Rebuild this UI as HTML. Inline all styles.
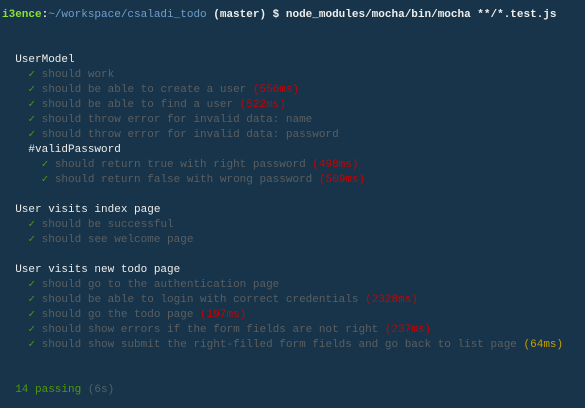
<!DOCTYPE html>
<html><head><meta charset="utf-8"><style>
html,body{margin:0;padding:0;background:#17344a;width:585px;height:408px;overflow:hidden}
pre{margin:0;position:absolute;left:2px;top:8px;font-family:"Liberation Mono",monospace;font-size:11px;line-height:15px;color:#5c5f60}
.g{color:#8ae234;font-weight:bold}
.w{color:#eeeeec;font-weight:bold}
.b{color:#6f9fcf}
.t{color:#eeeeec}
.c{color:#4e9a06}
.r{color:#c00}
.y{color:#c4a000}
</style></head><body><pre><span class="g">i3ence</span><span class="w">:</span><span class="b">~/workspace/csaladi_todo</span><span class="w"> (master) $ node_modules/mocha/bin/mocha **/*.test.js</span>


  <span class="t">UserModel</span>
    <span class="c">✓</span> should work
    <span class="c">✓</span> should be able to create a user <span class="r">(556ms)</span>
    <span class="c">✓</span> should be able to find a user <span class="r">(522ms)</span>
    <span class="c">✓</span> should throw error for invalid data: name
    <span class="c">✓</span> should throw error for invalid data: password
    <span class="t">#validPassword</span>
      <span class="c">✓</span> should return true with right password <span class="r">(498ms)</span>
      <span class="c">✓</span> should return false with wrong password <span class="r">(509ms)</span>

  <span class="t">User visits index page</span>
    <span class="c">✓</span> should be successful
    <span class="c">✓</span> should see welcome page

  <span class="t">User visits new todo page</span>
    <span class="c">✓</span> should go to the authentication page
    <span class="c">✓</span> should be able to login with correct credentials <span class="r">(2328ms)</span>
    <span class="c">✓</span> should go the todo page <span class="r">(197ms)</span>
    <span class="c">✓</span> should show errors if the form fields are not right <span class="r">(237ms)</span>
    <span class="c">✓</span> should show submit the right-filled form fields and go back to list page <span class="y">(64ms)</span>


  <span class="c">14 passing</span> (6s)
</pre></body></html>
